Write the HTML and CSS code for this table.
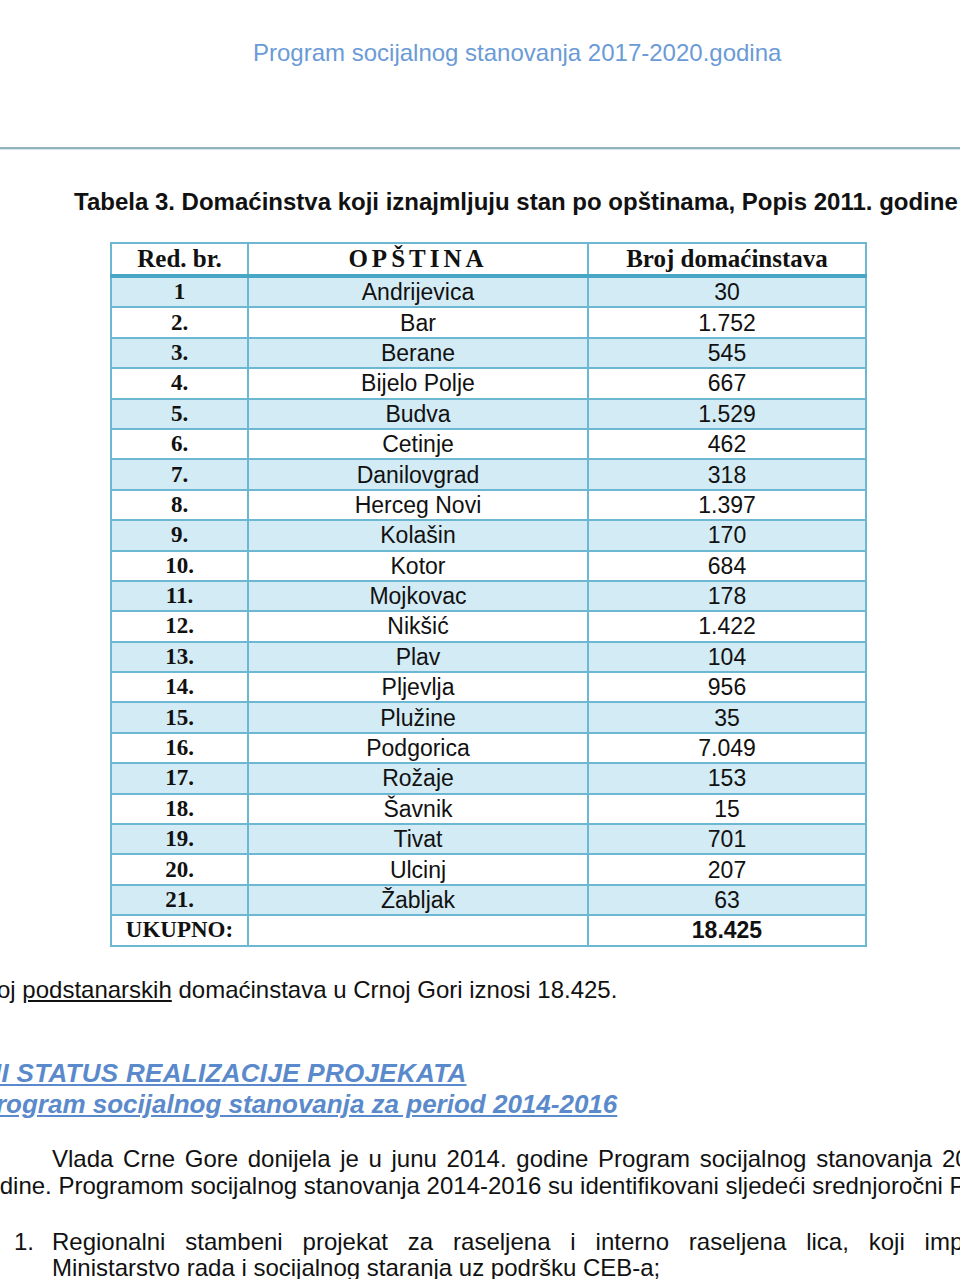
FILE: index.html
```html
<!DOCTYPE html>
<html lang="sr">
<head>
<meta charset="utf-8">
<title>Program socijalnog stanovanja 2017-2020</title>
<link rel="stylesheet" href="styles.css">
</head>
<body>
<div class="page">
  <header class="running-head">Program socijalnog stanovanja 2017-2020.godina</header>
  <div class="rule"></div>
  <p class="caption">Tabela 3. Domaćinstva koji iznajmljuju stan po opštinama, Popis 2011. godine</p>
  <table class="data">
    <thead>
      <tr><th class="c1">Red. br.</th><th class="c2 spaced">OPŠTINA</th><th class="c3">Broj domaćinstava</th></tr>
    </thead>
    <tbody>
      <tr class="alt"><td class="c1">1</td><td>Andrijevica</td><td>30</td></tr>
      <tr><td class="c1">2.</td><td>Bar</td><td>1.752</td></tr>
      <tr class="alt"><td class="c1">3.</td><td>Berane</td><td>545</td></tr>
      <tr><td class="c1">4.</td><td>Bijelo Polje</td><td>667</td></tr>
      <tr class="alt"><td class="c1">5.</td><td>Budva</td><td>1.529</td></tr>
      <tr><td class="c1">6.</td><td>Cetinje</td><td>462</td></tr>
      <tr class="alt"><td class="c1">7.</td><td>Danilovgrad</td><td>318</td></tr>
      <tr><td class="c1">8.</td><td>Herceg Novi</td><td>1.397</td></tr>
      <tr class="alt"><td class="c1">9.</td><td>Kolašin</td><td>170</td></tr>
      <tr><td class="c1">10.</td><td>Kotor</td><td>684</td></tr>
      <tr class="alt"><td class="c1">11.</td><td>Mojkovac</td><td>178</td></tr>
      <tr><td class="c1">12.</td><td>Nikšić</td><td>1.422</td></tr>
      <tr class="alt"><td class="c1">13.</td><td>Plav</td><td>104</td></tr>
      <tr><td class="c1">14.</td><td>Pljevlja</td><td>956</td></tr>
      <tr class="alt"><td class="c1">15.</td><td>Plužine</td><td>35</td></tr>
      <tr><td class="c1">16.</td><td>Podgorica</td><td>7.049</td></tr>
      <tr class="alt"><td class="c1">17.</td><td>Rožaje</td><td>153</td></tr>
      <tr><td class="c1">18.</td><td>Šavnik</td><td>15</td></tr>
      <tr class="alt"><td class="c1">19.</td><td>Tivat</td><td>701</td></tr>
      <tr><td class="c1">20.</td><td>Ulcinj</td><td>207</td></tr>
      <tr class="alt"><td class="c1">21.</td><td>Žabljak</td><td>63</td></tr>
      <tr class="total"><td class="c1">UKUPNO:</td><td></td><td class="strong">18.425</td></tr>
    </tbody>
  </table>
  <p class="note">Broj <span class="ul">podstanarskih</span> domaćinstava u Crnoj Gori iznosi 18.425.</p>
  <h2 class="sec">II STATUS REALIZACIJE PROJEKATA</h2>
  <h3 class="subsec">2.1. Program socijalnog stanovanja za period 2014-2016</h3>
  <div class="para">
    <div class="line first">Vlada Crne Gore donijela je u junu 2014. godine Program socijalnog stanovanja 2014-2016.</div>
    <div class="line second">godine. Programom socijalnog stanovanja 2014-2016 su identifikovani sljedeći srednjoročni Projekti:</div>
  </div>
  <ol class="list">
    <li class="item">
      <span class="num">1.</span>
      <div class="item-body">
        <div class="just">Regionalni stambeni projekat za raseljena i interno raseljena lica, koji implementira</div>
        <div class="line">Ministarstvo rada i socijalnog staranja uz podršku CEB-a;</div>
      </div>
    </li>
  </ol>
</div>
</body>
</html>
```
FILE: styles.css
```css
html, body {
  margin: 0;
  padding: 0;
  background: #ffffff;
}
body {
  width: 960px;
  height: 1279px;
  overflow: hidden;
  font-family: "Liberation Sans", Arial, sans-serif;
  color: #111111;
}
.page {
  width: 960px;
}
.running-head {
  padding-top: 39px;
  padding-left: 253px;
  font-size: 24px;
  line-height: 27px;
  color: #6b9bd6;
  white-space: nowrap;
}
.rule {
  margin-top: 81px;
  height: 2px;
  background: #8fb2bb;
  border-bottom: 1px solid #d6e6ea;
}
.caption {
  margin: 39px 0 0 74px;
  font-size: 24px;
  line-height: 26px;
  font-weight: bold;
  white-space: nowrap;
}
.data {
  margin: 27px 0 0 110px;
  width: 757px;
  border-collapse: collapse;
  table-layout: fixed;
}
.data th, .data td {
  border: 2px solid #6cb7d1;
  padding: 0;
  text-align: center;
  vertical-align: middle;
  height: 28.4px;
  font-size: 23px;
  line-height: 26px;
  white-space: nowrap;
}
.data th {
  height: 30px;
  font-family: "Liberation Serif", "Times New Roman", serif;
  font-weight: bold;
  font-size: 25px;
  border-bottom: 4px solid #48a6c6;
  background: #ffffff;
}
.data .c1 { width: 135px; }
.data th.c2 { width: 338px; }
.data td.c1 {
  font-family: "Liberation Serif", "Times New Roman", serif;
  font-weight: bold;
  font-size: 23px;
}
.spaced {
  letter-spacing: 4px;
}
.data tr.alt td {
  background: #d3ebf4;
}
.data .strong {
  font-weight: bold;
}
.note {
  margin: 29px 0 0 -27px;
  font-size: 24px;
  line-height: 27px;
  white-space: nowrap;
}
.ul {
  text-decoration: underline;
}
.sec, .subsec {
  margin: 0;
  font-size: 26px;
  line-height: 31px;
  font-weight: bold;
  font-style: italic;
  text-decoration: underline;
  color: #5a8acb;
  white-space: nowrap;
}
.sec {
  margin-top: 55px;
  margin-left: -6px;
  letter-spacing: 0.3px;
}
.subsec {
  margin-left: -72px;
}
.para {
  margin-top: 25px;
  font-size: 24px;
  line-height: 27px;
  white-space: nowrap;
}
.para .first {
  padding-left: 52px;
  word-spacing: 3px;
}
.para .second {
  margin-left: -27px;
}
.list {
  list-style: none;
  margin: 30px 0 0 0;
  padding: 0;
  font-size: 24px;
  line-height: 26px;
}
.item {
  display: flex;
}
.num {
  width: 38px;
  padding-left: 14px;
  flex: none;
}
.item-body {
  width: 1010px;
  flex: none;
}
.just {
  text-align: justify;
  text-align-last: justify;
}
.line {
  white-space: nowrap;
}
```
